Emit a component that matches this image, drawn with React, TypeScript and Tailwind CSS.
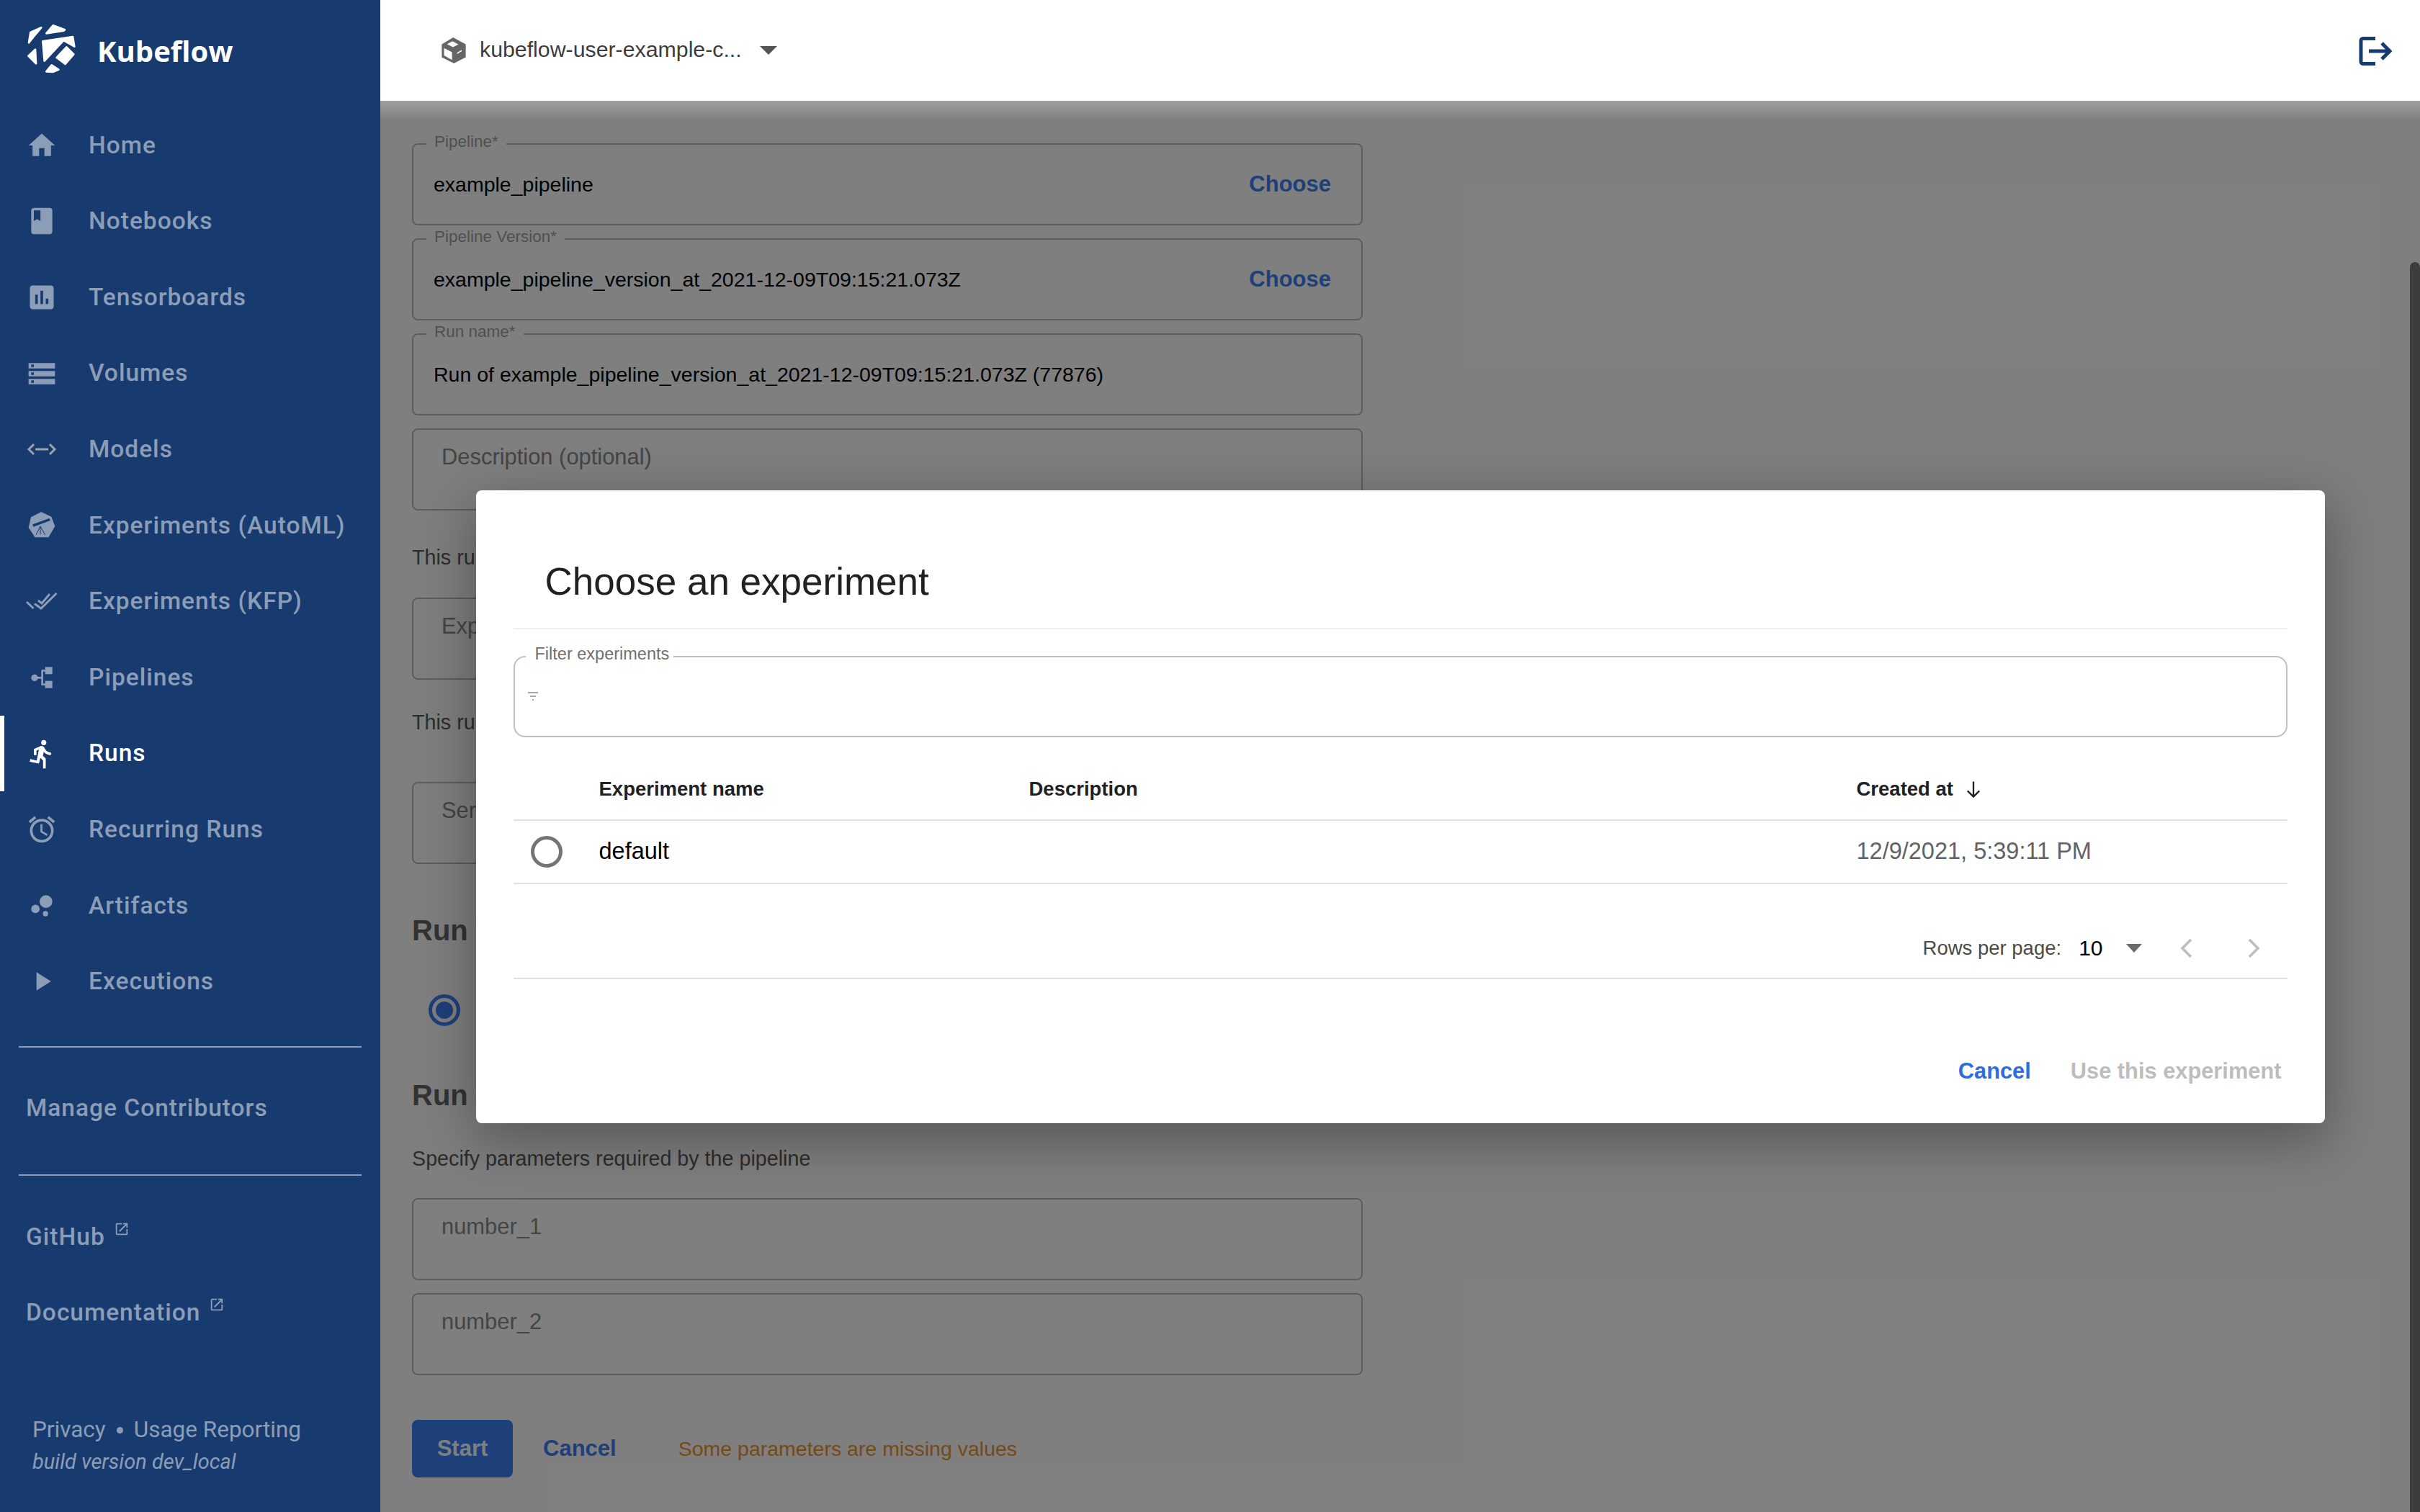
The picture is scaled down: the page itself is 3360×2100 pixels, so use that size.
import React from 'react';
import { MdHome, MdBook, MdAssessment, MdStorage, MdDirectionsRun, MdAccessAlarm, MdBubbleChart, MdPlayArrow, MdOpenInNew } from 'react-icons/md';

const Logo = () => (
  <svg viewBox="0 0 270 270" className="w-[90px] h-[90px] shrink-0" fill="white" stroke="white" strokeWidth="8" strokeLinejoin="round">
    <polygon points="30,100 37,57 82,37 50,75" />
    <polygon points="103,61 131,28 180,46 176,50" />
    <polygon points="88,94 213,75 220,116 175,90 95,176" />
    <polygon points="146,162 187,118 217,148 182,189" />
    <polygon points="28,155 57,128 60,187" />
    <polygon points="103,220 125,193 154,212 130,222" />
  </svg>
);

const ModelsIcon = () => (
  <svg viewBox="0 0 44 44" className="w-[44px] h-[44px]" fill="none" stroke="#98a3ae" strokeWidth="3">
    <path d="M11 15l-7 7 7 7M33 15l7 7-7 7M13 22h18" />
  </svg>
);

const KatibIcon = () => (
  <svg viewBox="24 31 132 132" className="w-[44px] h-[44px]">
    <polygon points="88,40 130,60 145,100 118,146 62,146 35,105 45,62" fill="currentColor" />
    <path d="M52 92l70-26 3 10-70 26z" fill="#183b6f" />
    <path d="M84 100l-18 36M84 100v34M84 100l20 36" stroke="#183b6f" strokeWidth="3" fill="none" />
  </svg>
);

const DoneIcon = () => (
  <svg viewBox="0 0 44 44" className="w-[44px] h-[44px]" fill="none" stroke="currentColor" strokeWidth="3">
    <path d="M1 23l9.5 9M12 25.5l9 6.5L42.5 11M17 21l5 4 11-13" />
  </svg>
);

const PipelineIcon = () => (
  <svg viewBox="22 38 132 132" className="w-[44px] h-[44px]" fill="currentColor">
    <circle cx="58" cy="105" r="14" />
    <rect x="102" y="60" width="30" height="30" />
    <rect x="102" y="118" width="30" height="30" />
    <path d="M70 105h20M102 75H90v58h12" fill="none" stroke="currentColor" strokeWidth="8" />
  </svg>
);

const CubeIcon = () => (
  <svg viewBox="30 30 115 120" className="w-[38px] h-[38px] shrink-0">
    <polygon points="85,33 140,63 140,120 88,147 35,120 35,63" fill="#666" />
    <polygon points="58,62 82,50 108,64 84,76" fill="white" />
    <polygon points="45,80 80,98 80,132 45,112" fill="white" />
    <polygon points="102,100 122,88 122,94 102,106" fill="white" />
  </svg>
);

const LogoutIcon = () => (
  <svg viewBox="0 0 48 48" className="w-[48px] h-[48px]" fill="none" stroke="#183b6f" strokeWidth="5">
    <path d="M25 6.5H8a3 3 0 0 0-3 3v29a3 3 0 0 0 3 3h17" />
    <path d="M16 24h27M34 13l11 11-11 11" />
  </svg>
);

const navItems = [
  { label: 'Home', icon: <MdHome size={44} /> },
  { label: 'Notebooks', icon: <MdBook size={44} /> },
  { label: 'Tensorboards', icon: <MdAssessment size={44} /> },
  { label: 'Volumes', icon: <MdStorage size={44} /> },
  { label: 'Models', icon: <ModelsIcon /> },
  { label: 'Experiments (AutoML)', icon: <KatibIcon /> },
  { label: 'Experiments (KFP)', icon: <DoneIcon /> },
  { label: 'Pipelines', icon: <PipelineIcon /> },
  { label: 'Runs', icon: <MdDirectionsRun size={44} />, active: true },
  { label: 'Recurring Runs', icon: <MdAccessAlarm size={44} /> },
  { label: 'Artifacts', icon: <MdBubbleChart size={44} /> },
  { label: 'Executions', icon: <MdPlayArrow size={44} /> },
];

const Sidebar = () => (
  <aside className="w-[528px] shrink-0 h-full bg-[#183b6f] flex flex-col font-[Roboto,sans-serif] font-medium text-[33.5px] tracking-[1px] text-white/50">
    <div className="h-[149px] shrink-0 flex items-center pl-[30px] pb-[8px]">
      <Logo />
      <span className="ml-[15px] font-['Open_Sans',sans-serif] font-bold text-[40px] tracking-normal text-white">Kubeflow</span>
    </div>
    <nav>
      {navItems.map((item) => (
        <div
          key={item.label}
          className={`h-[105.6px] flex items-center ${item.active ? 'border-l-[6px] border-white text-white pl-[30px]' : 'pl-[36px]'}`}
        >
          <span className="w-[44px] h-[44px] flex items-center justify-center">{item.icon}</span>
          <span className="ml-[43px] whitespace-nowrap">{item.label}</span>
        </div>
      ))}
    </nav>
    <div className="h-[2px] mx-[26px] mt-[37px] bg-white/50" />
    <div className="h-[176px] flex items-center pl-[36px] pb-[9px]">Manage Contributors</div>
    <div className="h-[2px] mx-[26px] bg-white/50" />
    <div className="mt-[32px] h-[105px] flex items-center pl-[36px]">
      GitHub <MdOpenInNew size={22} className="ml-[12px] -mt-[22px]" />
    </div>
    <div className="h-[105px] flex items-center pl-[36px]">
      Documentation <MdOpenInNew size={22} className="ml-[12px] -mt-[22px]" />
    </div>
    <div className="pl-[45px] mt-[89px] font-normal text-[31.5px] tracking-normal leading-[44px]">
      <div className="flex items-center">
        Privacy <span className="w-[9px] h-[9px] rounded-full bg-white/50 mx-[15px]" /> Usage Reporting
      </div>
      <div className="italic text-[29px] leading-[44px] tracking-normal">build version dev_local</div>
    </div>
  </aside>
);

const Field = ({ label, value, placeholder, choose }: { label?: string; value?: string; placeholder?: string; choose?: boolean }) => (
  <div className="relative w-[1320px] h-[114px] border-2 border-[#bbb] rounded-[8px] flex items-center pl-[28px] pr-[42px] justify-between">
    {label && <span className="absolute left-[18px] -top-[17px] px-[11px] bg-white text-[22.5px] leading-[26px] text-[#a0a0a0]">{label}</span>}
    {value && <span className="text-[28.5px] text-black">{value}</span>}
    {placeholder && <span className="absolute left-[39px] top-[20px] text-[30.9px] leading-[36px] text-[#8a8a8a]">{placeholder}</span>}
    {choose && <span className="text-[31px] font-bold text-[#3b7ef5]">Choose</span>}
  </div>
);

const RunForm = () => (
  <div className="pl-[44px] pt-[59px] flex flex-col">
    <div className="flex flex-col gap-[18px]">
      <Field label="Pipeline*" value="example_pipeline" choose />
      <Field label="Pipeline Version*" value="example_pipeline_version_at_2021-12-09T09:15:21.073Z" choose />
      <Field label="Run name*" value="Run of example_pipeline_version_at_2021-12-09T09:15:21.073Z (77876)" />
      <Field placeholder="Description (optional)" />
    </div>
    <p className="mt-[45px] h-[40px] leading-[40px] text-[28.7px] text-[#5a5a5a] whitespace-nowrap">This run will be associated with the following experiment</p>
    <div className="mt-[36px]"><Field placeholder="Experiment" /></div>
    <p className="mt-[39px] h-[40px] leading-[40px] text-[28.7px] text-[#5a5a5a] whitespace-nowrap">This run will use the following Kubernetes service account</p>
    <div className="mt-[63px]"><Field placeholder="Service Account (Optional)" /></div>
    <h2 className="mt-[72px] h-[40px] leading-[40px] text-[40px] font-bold text-[#666]">Run Type</h2>
    <div className="mt-[69px] flex items-center h-[44px]">
      <span className="ml-[23px] w-[44px] h-[44px] rounded-full border-[5px] border-[#3b7ef5] flex items-center justify-center">
        <span className="w-[24px] h-[24px] rounded-full bg-[#3b7ef5]" />
      </span>
      <span className="ml-[30px] text-[28px]">One-off</span>
    </div>
    <h2 className="mt-[76px] h-[40px] leading-[40px] text-[40px] font-bold text-[#666]">Run parameters</h2>
    <p className="mt-[48px] h-[40px] leading-[40px] text-[28.7px] text-[#5a5a5a]">Specify parameters required by the pipeline</p>
    <div className="mt-[35px] flex flex-col gap-[18px]">
      <Field placeholder="number_1" />
      <Field placeholder="number_2" />
    </div>
    <div className="mt-[62px] flex items-center">
      <button className="w-[140px] h-[80px] rounded-[8px] bg-[#3b7ef5] text-white font-bold text-[31px]">Start</button>
      <span className="ml-[42px] text-[31px] font-bold text-[#3b7ef5]">Cancel</span>
      <span className="ml-[86px] text-[28.5px] text-[#e8942a]">Some parameters are missing values</span>
    </div>
  </div>
);

const ExperimentDialog = () => (
  <div className="w-[2567px] h-[879px] bg-white rounded-[8px] shadow-[0_22px_76px_6px_rgba(0,0,0,0.3)] px-[52px] flex flex-col">
    <div className="h-[193px] shrink-0 border-b-2 border-[#eee] flex items-center pl-[44px] pt-[64px] text-[53px] text-[#202124]">
      Choose an experiment
    </div>
    <div className="relative mt-[37px] h-[113px] shrink-0 border-2 border-[#bfbfbf] rounded-[16px] flex items-center pl-[18px]">
      <span className="absolute left-[15px] -top-[19px] pl-[13px] pr-[6px] bg-white text-[23.5px] leading-[28px] text-[#707070]">Filter experiments</span>
      <svg viewBox="0 0 14 14" className="w-[14px] h-[14px]" fill="none" stroke="#8a8a8a" strokeWidth="1.4">
        <path d="M0 2h14M3 7h8M6 12h2" />
      </svg>
    </div>
    <div className="h-[116px] shrink-0 border-b-2 border-[#e0e0e0] flex items-center pt-[30px] text-[27.5px] font-bold text-[#202124]">
      <span className="ml-[119px] w-[597px]">Experiment name</span>
      <span className="w-[1149px]">Description</span>
      <span>Created at</span>
      <svg viewBox="0 0 24 24" className="ml-[14px] w-[28px] h-[28px]" fill="none" stroke="#202124" strokeWidth="2">
        <path d="M12 3v18M5 14l7 7 7-7" />
      </svg>
    </div>
    <div className="h-[88px] shrink-0 border-b-2 border-[#e0e0e0] flex items-center text-[32.5px]">
      <span className="ml-[24px] w-[44px] h-[44px] rounded-full border-[5px] border-[#757575] shrink-0" />
      <span className="ml-[51px] w-[597px] text-black">default</span>
      <span className="ml-[1149px] text-[#5f6368]">12/9/2021, 5:39:11 PM</span>
    </div>
    <div className="h-[132px] shrink-0 border-b-2 border-[#e0e0e0] flex items-center justify-end pr-[38px] pt-[48px]">
      <span className="text-[27.5px] text-[#4a4a4a]">Rows per page:</span>
      <span className="ml-[24px] text-[30px] text-black">10</span>
      <svg viewBox="0 0 22 12" className="ml-[32px] w-[22px] h-[12px]" fill="#6b6b6b"><path d="M0 0h22L11 12z" /></svg>
      <svg viewBox="0 0 18 26" className="ml-[53px] w-[18px] h-[26px]" fill="none" stroke="#bdbdbd" strokeWidth="3.5"><path d="M15 1L3 13l12 12" /></svg>
      <svg viewBox="0 0 18 26" className="ml-[75px] w-[18px] h-[26px]" fill="none" stroke="#bdbdbd" strokeWidth="3.5"><path d="M3 1l12 12L3 25" /></svg>
    </div>
    <div className="flex-1 flex items-center justify-end pr-[8px] pt-[58px] text-[30.8px] font-bold">
      <span className="text-[#2d6ce0]">Cancel</span>
      <span className="ml-[55px] text-[#bdbdbd]">Use this experiment</span>
    </div>
  </div>
);

export default function App() {
  return (
    <div className="w-[3360px] h-[2100px] flex overflow-hidden bg-white font-['Liberation_Sans',Arial,sans-serif]">
      <Sidebar />
      <main className="flex-1 flex flex-col min-w-0">
        <header className="h-[140px] shrink-0 flex items-center pl-[83px] pr-[39px] bg-white">
          <CubeIcon />
          <span className="ml-[17px] -mt-[3px] text-[30.3px] text-[#3c3c3c] whitespace-nowrap">kubeflow-user-example-c...</span>
          <svg viewBox="0 0 24 12" className="ml-[25px] w-[24px] h-[12px]" fill="#555"><path d="M0 0h24L12 12z" /></svg>
          <span className="ml-auto pt-[2px]"><LogoutIcon /></span>
        </header>
        <section className="relative flex-1 min-h-0 overflow-hidden">
          <RunForm />
          <div className="absolute right-0 top-[224px] bottom-0 w-[14px] rounded-t-full bg-[#7a7a7a]" />
          <div className="absolute inset-0 bg-black/50 flex items-center justify-center">
            <ExperimentDialog />
          </div>
          <div className="absolute inset-x-0 top-0 h-[26px] bg-gradient-to-b from-white/25 to-transparent" />
        </section>
      </main>
    </div>
  );
}
